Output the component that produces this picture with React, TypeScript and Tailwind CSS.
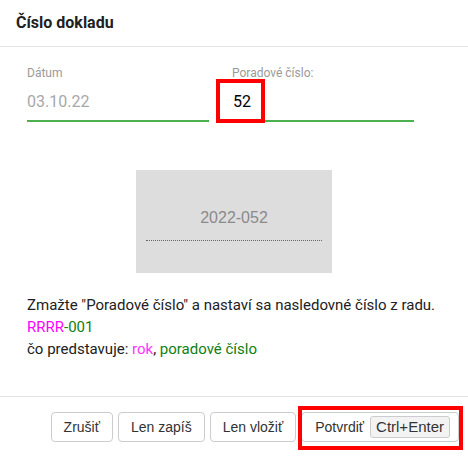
import React from 'react'

const Field = ({ label, value, dim }: { label: string; value: string; dim?: boolean }) => {
  return (
    <div className="w-[182px]">
      <div className="text-[12px] leading-[14px] text-[#9a9a9a]">{label}</div>
      <div
        className={`mt-[11px] h-[31px] text-[16px] leading-[22px] border-b-2 border-[#4caf50] ${
          dim ? 'text-[#a8a8a8]' : 'pl-[1px] text-black'
        }`}
      >
        {value}
      </div>
    </div>
  )
}

const Button = ({ children }: { children: React.ReactNode }) => (
  <button className="h-[30px] px-[12px] rounded-[4px] border border-[#cccccc] bg-white text-[14px] text-[#333] flex items-center">
    {children}
  </button>
)

const App = () => {
  return (
    <div className="relative w-[468px] h-[456px] bg-white font-['Roboto',sans-serif] text-[#212121] overflow-hidden">
      {/* Header */}
      <div className="h-[47px] px-4 flex items-center border-b border-[#e3e3e3]">
        <h1 className="text-[16px] font-bold text-[#212121]">Číslo dokladu</h1>
      </div>

      {/* Fields */}
      <div className="relative mt-[19px] pl-[27px] flex gap-[23px]">
        <Field label="Dátum" value="03.10.22" dim />
        <Field label="Poradové číslo:" value="52" />
        <div className="absolute left-[216px] top-[13px] w-[49px] h-[44px] border-4 border-[#ff0000]" />
      </div>

      {/* Preview */}
      <div className="mt-[48px] mx-auto w-[196px] h-[103px] bg-[#dddddd] flex flex-col items-center pt-[37px]">
        <div className="text-[16px] leading-[22px] text-[#8a8a8a] font-['Liberation_Sans',sans-serif]">2022-052</div>
        <div className="mt-[11px] w-[176px] border-t border-dotted border-[#666]" />
      </div>

      {/* Info */}
      <div className="mt-[21px] px-[27px] text-[15px] leading-[22px] text-[#212121]">
        <div>Zmažte "Poradové číslo" a nastaví sa nasledovné číslo z radu.</div>
        <div>
          <span className="text-[#ff00ff]">RRRR</span>
          <span className="text-[#108010]">-001</span>
        </div>
        <div>
          čo predstavuje: <span className="text-[#ff33ff]">rok</span>,{' '}
          <span className="text-[#108010]">poradové číslo</span>
        </div>
      </div>

      {/* Footer */}
      <div className="absolute left-0 right-0 top-[396px] border-t border-[#e3e3e3]">
        <div className="relative mt-[15px] pr-[9px] flex justify-end gap-[5px] font-['Liberation_Sans',sans-serif]">
          <Button>Zrušiť</Button>
          <Button>Len zapíš</Button>
          <Button>Len vložiť</Button>
          <button className="h-[30px] pl-[13px] pr-[8px] rounded-[4px] border border-[#cccccc] bg-white text-[14px] text-[#333] flex items-center gap-[6px]">
            Potvrdiť
            <span className="h-[22px] px-[5px] rounded-[3px] border border-[#cccccc] bg-[#f3f3f3] text-[15px] leading-[20px] text-[#333]">
              Ctrl+Enter
            </span>
          </button>
          <div className="absolute right-[5px] top-[-6px] w-[165px] h-[44px] border-4 border-[#ff0000]" />
        </div>
      </div>
    </div>
  )
}

export default App
